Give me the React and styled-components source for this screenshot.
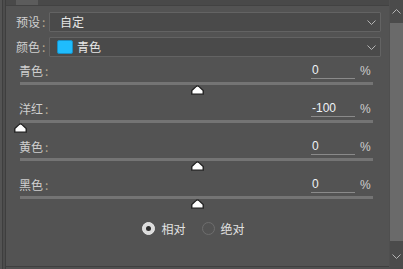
import React from "react";
import styled, { createGlobalStyle } from "styled-components";

const GlobalStyle = createGlobalStyle`
  html, body {
    margin: 0;
    padding: 0;
    background: #535353;
  }
  * {
    box-sizing: border-box;
  }
`;

const sliders = [
  { name: "青色", value: 0 },
  { name: "洋红", value: -100 },
  { name: "黄色", value: 0 },
  { name: "黑色", value: 0 },
];

function Chevron({ up }) {
  return (
    <svg width="9" height="5" viewBox="0 0 9 5">
      <path
        d={up ? "M0.5 4.5 L4.5 0.5 L8.5 4.5" : "M0.5 0.5 L4.5 4.5 L8.5 0.5"}
        fill="none"
        stroke="#b4b4b4"
        strokeWidth="1"
      />
    </svg>
  );
}

function ThumbShape() {
  return (
    <svg width="13" height="10" viewBox="0 0 13 10">
      <path
        d="M6.5 0.8 Q7.2 0.8 8 1.6 L12.2 5.6 L12.2 9.2 L0.8 9.2 L0.8 5.6 L5 1.6 Q5.8 0.8 6.5 0.8 Z"
        fill="#ffffff"
        stroke="#1c1c1c"
        strokeWidth="1.3"
      />
    </svg>
  );
}

function Slider({ name, value }) {
  const pct = ((value + 100) / 200) * 100;
  return (
    <SliderBlock>
      <LabelRow>
        <SliderLabel>
          {name}
          <Colon>:</Colon>
        </SliderLabel>
        <ValueField>{value}</ValueField>
        <Percent>%</Percent>
      </LabelRow>
      <TrackArea>
        <Track />
        <Thumb style={{ left: `${pct}%` }}>
          <ThumbShape />
        </Thumb>
      </TrackArea>
    </SliderBlock>
  );
}

export default function App() {
  return (
    <>
      <GlobalStyle />
      <Frame>
        <LeftEdge />
        <Main>
          <TopStrip>
            <Tab />
          </TopStrip>
          <Form>
            <SelectRow>
              <FieldLabel>
                预设<Colon>:</Colon>
              </FieldLabel>
              <SelectBox>
                <SelectText>自定</SelectText>
                <Chevron />
              </SelectBox>
            </SelectRow>
            <SelectRow>
              <FieldLabel>
                颜色<Colon>:</Colon>
              </FieldLabel>
              <SelectBox>
                <SelectText>
                  <Swatch />
                  青色
                </SelectText>
                <Chevron />
              </SelectBox>
            </SelectRow>
          </Form>
          <Sliders>
            {sliders.map((s) => (
              <Slider key={s.name} name={s.name} value={s.value} />
            ))}
          </Sliders>
          <RadioRow>
            <RadioItem>
              <Radio checked />
              相对
            </RadioItem>
            <RadioItem>
              <Radio />
              绝对
            </RadioItem>
          </RadioRow>
          <Spacer />
          <BottomBar />
        </Main>
        <ScrollBar>
          <ScrollButton>
            <Chevron up />
          </ScrollButton>
          <ScrollThumb />
          <ScrollButton bottom>
            <Chevron />
          </ScrollButton>
        </ScrollBar>
      </Frame>
    </>
  );
}

const Frame = styled.div`
  width: 403px;
  height: 269px;
  display: grid;
  grid-template-columns: 6px 1fr 14px;
  background: #535353;
  overflow: hidden;
  font-family: "Noto Sans CJK SC", "Liberation Sans", sans-serif;
  font-size: 12px;
  color: #d4d4d4;
`;

const LeftEdge = styled.div`
  border-left: 1px solid #535353;
  position: relative;
  background: linear-gradient(
    to right,
    #535353 0,
    #535353 1px,
    #3e3e3e 1px,
    #3e3e3e 2px,
    #4c4c4c 2px,
    #4c4c4c 4px,
    #3e3e3e 4px,
    #3e3e3e 5px,
    #535353 5px
  );
`;

const Main = styled.div`
  display: flex;
  flex-direction: column;
  min-width: 0;
`;

const TopStrip = styled.div`
  height: 6px;
  background: #494949;
  border-bottom: 1px solid #424242;
  display: flex;
`;

const Tab = styled.div`
  margin-left: 10px;
  width: 22px;
  background: #5c5c5c;
`;

const Form = styled.div`
  display: flex;
  flex-direction: column;
  gap: 5px;
  padding: 6px 8px 0 10px;
`;

const SelectRow = styled.div`
  display: flex;
  align-items: center;
  height: 20px;
`;

const FieldLabel = styled.div`
  width: 33px;
  line-height: 16px;
  color: #cfcfcf;
`;

const Colon = styled.span`
  margin-left: 2px;
  color: #b8a890;
`;

const SelectBox = styled.div`
  flex: 1;
  height: 20px;
  display: flex;
  align-items: center;
  justify-content: space-between;
  padding: 0 4px 0 7px;
  background: #4a4a4a;
  border: 1px solid #636363;
  border-radius: 1px;
`;

const SelectText = styled.div`
  display: flex;
  align-items: center;
  gap: 4px;
  color: #e6e6e6;
  line-height: 16px;
  padding-left: 3px;
`;

const Swatch = styled.span`
  display: inline-block;
  width: 16px;
  height: 14px;
  margin-left: -3px;
  background: #1fbcfd;
  border: 1px solid #1a8fc4;
  border-radius: 2px;
`;

const Sliders = styled.div`
  display: flex;
  flex-direction: column;
  padding: 6px 16px 0 14px;
`;

const SliderBlock = styled.div`
  height: 38px;
  display: flex;
  flex-direction: column;
`;

const LabelRow = styled.div`
  height: 16px;
  display: flex;
  align-items: center;
`;

const SliderLabel = styled.div`
  flex: 1;
  margin-left: -1px;
  color: #cfcfcf;
  line-height: 16px;
`;

const ValueField = styled.div`
  width: 44px;
  height: 16px;
  line-height: 15px;
  border-bottom: 1px solid #8a8a8a;
  font-family: "Liberation Sans", sans-serif;
  color: #eef2f6;
  padding-left: 1px;
`;

const Percent = styled.div`
  width: 13px;
  margin-left: 5px;
  font-family: "Liberation Sans", sans-serif;
  color: #cdcdcd;
  line-height: 16px;
`;

const TrackArea = styled.div`
  position: relative;
  margin-top: 3px;
  height: 13px;
`;

const Track = styled.div`
  height: 3px;
  background: #747474;
`;

const Thumb = styled.div`
  position: absolute;
  top: 3px;
  width: 13px;
  height: 10px;
  margin-left: -6px;
  display: flex;
`;

const RadioRow = styled.div`
  display: flex;
  justify-content: center;
  gap: 16px;
  padding-right: 8px;
  margin-top: 5px;
  height: 17px;
  align-items: center;
`;

const RadioItem = styled.div`
  display: flex;
  align-items: center;
  gap: 6px;
  color: #e2e2e2;
  line-height: 16px;
`;

const Radio = styled.span`
  width: 13px;
  height: 13px;
  border-radius: 50%;
  position: relative;
  background: ${(p) => (p.checked ? "#dcdcdc" : "transparent")};
  border: 1px solid ${(p) => (p.checked ? "#e8e8e8" : "#6e6e6e")};
  &::after {
    content: "";
    display: ${(p) => (p.checked ? "block" : "none")};
    position: absolute;
    left: 3px;
    top: 3px;
    width: 5px;
    height: 5px;
    border-radius: 50%;
    background: #2e2e2e;
  }
`;

const Spacer = styled.div`
  flex: 1;
`;

const BottomBar = styled.div`
  height: 3px;
  border-top: 1px solid #3f3f3f;
  background: #505050;
`;

const ScrollBar = styled.div`
  display: flex;
  flex-direction: column;
  background: #4b4b4b;
  border-left: 1px solid #4f4f4f;
`;

const ScrollButton = styled.div`
  height: ${(p) => (p.bottom ? "28px" : "23px")};
  display: flex;
  justify-content: center;
  align-items: ${(p) => (p.bottom ? "center" : "center")};
  padding-top: ${(p) => (p.bottom ? "2px" : "0")};
  flex-shrink: 0;
`;

const ScrollThumb = styled.div`
  flex: 1;
  background: #6a6a6a;
`;
